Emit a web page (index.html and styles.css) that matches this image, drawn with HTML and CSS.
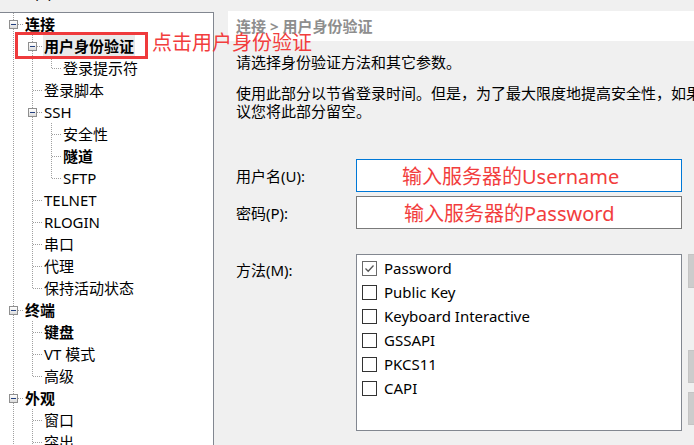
FILE: index.html
```html
<!DOCTYPE html>
<html lang="zh-CN">
<head>
<meta charset="utf-8">
<title>用户身份验证</title>
<link rel="stylesheet" href="styles.css">
</head>
<body>
<div class="dialog">
  <div class="left">
    <div class="cat-label"><span>类别(C):</span></div>
    <div class="tree">
      <div class="row"><span class="g tee"><i class="box"></i></span><span class="t b">连接</span></div>
      <div class="row"><span class="g pipe"></span><span class="g tee"><i class="box"></i></span><span class="t b sel">用户身份验证</span></div>
      <div class="row"><span class="g pipe"></span><span class="g pipe"></span><span class="g elbow"></span><span class="t">登录提示符</span></div>
      <div class="row"><span class="g pipe"></span><span class="g tee"></span><span class="t">登录脚本</span></div>
      <div class="row"><span class="g pipe"></span><span class="g tee"><i class="box"></i></span><span class="t">SSH</span></div>
      <div class="row"><span class="g pipe"></span><span class="g pipe"></span><span class="g tee"></span><span class="t">安全性</span></div>
      <div class="row"><span class="g pipe"></span><span class="g pipe"></span><span class="g tee"></span><span class="t b">隧道</span></div>
      <div class="row"><span class="g pipe"></span><span class="g pipe"></span><span class="g elbow"></span><span class="t">SFTP</span></div>
      <div class="row"><span class="g pipe"></span><span class="g tee"></span><span class="t">TELNET</span></div>
      <div class="row"><span class="g pipe"></span><span class="g tee"></span><span class="t">RLOGIN</span></div>
      <div class="row"><span class="g pipe"></span><span class="g tee"></span><span class="t">串口</span></div>
      <div class="row"><span class="g pipe"></span><span class="g tee"></span><span class="t">代理</span></div>
      <div class="row"><span class="g pipe"></span><span class="g elbow"></span><span class="t">保持活动状态</span></div>
      <div class="row"><span class="g tee"><i class="box"></i></span><span class="t b">终端</span></div>
      <div class="row"><span class="g pipe"></span><span class="g tee"></span><span class="t b">键盘</span></div>
      <div class="row"><span class="g pipe"></span><span class="g tee"></span><span class="t">VT 模式</span></div>
      <div class="row"><span class="g pipe"></span><span class="g elbow"></span><span class="t">高级</span></div>
      <div class="row"><span class="g tee"><i class="box"></i></span><span class="t b">外观</span></div>
      <div class="row"><span class="g pipe"></span><span class="g tee"></span><span class="t">窗口</span></div>
      <div class="row"><span class="g pipe"></span><span class="g tee"></span><span class="t">突出</span></div>
    </div>
  </div>

  <div class="right">
    <div class="header">连接 &gt; 用户身份验证</div>
    <div class="content">
      <p class="desc">请选择身份验证方法和其它参数。</p>
      <p class="desc2"><span class="line">使用此部分以节省登录时间。但是，为了最大限度地提高安全性，如果担心有人能访问您的计算机，建</span><span class="line">议您将此部分留空。</span></p>

      <div class="field first">
        <label class="lbl">用户名(U):</label>
        <div class="input focus"><span class="note">输入服务器的Username</span></div>
      </div>
      <div class="field second">
        <label class="lbl">密码(P):</label>
        <div class="input pw"><span class="note">输入服务器的Password</span></div>
      </div>

      <div class="field methods">
        <label class="lbl top">方法(M):</label>
        <div class="list">
          <div class="item"><span class="cb checked"><svg width="13" height="13" viewBox="0 0 13 13"><path d="M2.5 6.5 L5.2 9.2 L10.5 3.5" fill="none" stroke="#555" stroke-width="1.3"/></svg></span>Password</div>
          <div class="item"><span class="cb"></span>Public Key</div>
          <div class="item"><span class="cb"></span>Keyboard Interactive</div>
          <div class="item"><span class="cb"></span>GSSAPI</div>
          <div class="item"><span class="cb"></span>PKCS11</div>
          <div class="item"><span class="cb"></span>CAPI</div>
        </div>
        <div class="buttons">
          <div class="btn b1"></div>
          <div class="btn b2"></div>
          <div class="btn b3"></div>
        </div>
      </div>
    </div>
  </div>
</div>

<div class="anno-box"></div>
<div class="anno-text">点击用户身份验证</div>
</body>
</html>
```

FILE: styles.css
```css
html, body {
  margin: 0;
  padding: 0;
  width: 694px;
  height: 445px;
  overflow: hidden;
  background: #f0f0f0;
}

body {
  position: relative;
  font-family: "Noto Sans", "Noto Sans CJK SC", sans-serif;
  font-size: 15px;
  color: #000;
}

.dialog {
  display: flex;
  align-items: flex-start;
  width: 1000px;
}

/* ---------- left: category tree ---------- */
.left {
  width: 216px;
  flex: none;
}

.cat-label {
  height: 12px;
  overflow: hidden;
  padding-left: 4px;
  line-height: 18px;
}
.cat-label span {
  display: block;
  margin-top: -17px;
}

.tree {
  margin-left: -1px;
  width: 215px;
  height: 460px;
  background: #fff;
  border: 1px solid #828790;
  border-bottom: none;
  padding-left: 4px;
  box-sizing: border-box;
  overflow: hidden;
}

.row {
  display: flex;
  height: 22px;
  line-height: 22px;
  white-space: nowrap;
}

.g {
  flex: none;
  display: block;
  width: 19px;
  height: 22px;
}

.pipe {
  background: repeating-linear-gradient(to bottom, #a0a0a0 0 1px, transparent 1px 2px) no-repeat 9px 0 / 1px 100%;
}
.tee {
  background:
    repeating-linear-gradient(to right, #a0a0a0 0 1px, transparent 1px 2px) no-repeat 10px 11px / 9px 1px,
    repeating-linear-gradient(to bottom, #a0a0a0 0 1px, transparent 1px 2px) no-repeat 9px 0 / 1px 100%;
}
.elbow {
  background:
    repeating-linear-gradient(to right, #a0a0a0 0 1px, transparent 1px 2px) no-repeat 10px 11px / 9px 1px,
    repeating-linear-gradient(to bottom, #a0a0a0 0 1px, transparent 1px 2px) no-repeat 9px 0 / 1px 12px;
}

.box {
  display: block;
  width: 7px;
  height: 7px;
  margin: 7px 0 0 5px;
  border: 1px solid #8f8f8f;
  background:
    linear-gradient(#23407f, #23407f) no-repeat 1px 3px / 5px 1px,
    linear-gradient(#ffffff, #dcdcdc);
}

.t {
  margin-left: 1px;
  padding: 0 1px;
  height: 22px;
}
.t.b { font-weight: 700; }
.t.sel { background: #e9e9e9; }

/* ---------- right: settings page ---------- */
.right {
  flex: none;
  width: 784px;
}

.header {
  margin: 11px 0 0 12px;
  height: 30px;
  line-height: 30px;
  padding-left: 8px;
  background: #fff;
  color: #8e8e8e;
  font-weight: 700;
}

.content {
  padding-left: 20px;
}

.desc {
  margin: 12px 0 0;
  line-height: 18px;
}

.desc2 {
  margin: 13px 0 0;
  line-height: 18px;
}
.desc2 .line {
  display: block;
  white-space: nowrap;
}

.field {
  display: flex;
  align-items: center;
}
.field.first { margin-top: 39px; }
.field.second { margin-top: 4px; }
.field.methods {
  margin-top: 25px;
  align-items: flex-start;
}

.lbl {
  width: 120px;
  flex: none;
  line-height: 20px;
}
.lbl.top {
  margin-top: 6px;
}

.input {
  width: 326px;
  height: 33px;
  box-sizing: border-box;
  background: #fff;
  border: 1px solid #7a7a7a;
  padding-left: 45px;
  line-height: 33px;
}
.input.focus { border-color: #0078d7; }
.input.pw { padding-left: 47px; }

.note {
  color: #f23d3d;
  font-size: 20px;
}

.list {
  width: 326px;
  height: 177px;
  box-sizing: border-box;
  background: #fff;
  border: 1px solid #828790;
  padding: 1px 0 0 5px;
}

.item {
  display: flex;
  align-items: center;
  height: 24px;
  white-space: nowrap;
}

.cb {
  width: 15px;
  height: 15px;
  box-sizing: border-box;
  border: 1px solid #333;
  background: #fff;
  margin-right: 7px;
  display: flex;
  align-items: center;
  justify-content: center;
}
.cb.checked { border-color: #6a6a6a; }

.buttons {
  margin-left: 6px;
  display: flex;
  flex-direction: column;
}
.btn {
  width: 80px;
  box-sizing: border-box;
  background: #cccccc;
  border: 1px solid #c4c4c4;
}
.btn.b1 { height: 34px; }
.btn.b2 { height: 33px; margin-top: 62px; }
.btn.b3 { height: 33px; margin-top: 9px; }

/* ---------- red annotations ---------- */
.anno-box {
  position: absolute;
  left: 15px;
  top: 32px;
  width: 133px;
  height: 27px;
  box-sizing: border-box;
  border: 3px solid #ef3a3c;
}

.anno-text {
  position: absolute;
  left: 152px;
  top: 31px;
  font-size: 20px;
  line-height: 24px;
  color: #f23d3d;
  white-space: nowrap;
}
```
